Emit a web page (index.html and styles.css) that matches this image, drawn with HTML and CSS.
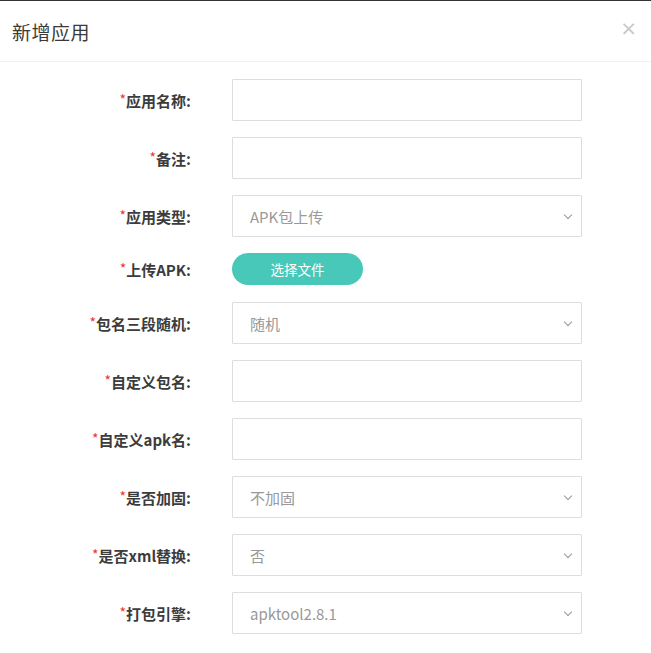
FILE: index.html
```html
<!DOCTYPE html>
<html lang="zh-CN">
<head>
    <meta charset="UTF-8">
    <meta name="viewport" content="width=device-width, initial-scale=1.0">
    <title>新增应用</title>
    <link rel="stylesheet" href="styles.css">
</head>
<body>
    <div class="modal">
        <div class="modal-header">
            <h3>新增应用</h3>
            <span class="close">&times;</span>
        </div>

        <form class="modal-body" action="#">
            <div class="form-row">
                <label><i>*</i>应用名称:</label>
                <input type="text" class="control">
            </div>
            <div class="form-row">
                <label><i>*</i>备注:</label>
                <input type="text" class="control">
            </div>
            <div class="form-row">
                <label><i>*</i>应用类型:</label>
                <div class="control select">APK包上传</div>
            </div>
            <div class="form-row short">
                <label><i>*</i>上传APK:</label>
                <button type="button" class="file-btn">选择文件</button>
            </div>
            <div class="form-row">
                <label><i>*</i>包名三段随机:</label>
                <div class="control select">随机</div>
            </div>
            <div class="form-row">
                <label><i>*</i>自定义包名:</label>
                <input type="text" class="control">
            </div>
            <div class="form-row">
                <label><i>*</i>自定义apk名:</label>
                <input type="text" class="control">
            </div>
            <div class="form-row">
                <label><i>*</i>是否加固:</label>
                <div class="control select">不加固</div>
            </div>
            <div class="form-row">
                <label><i>*</i>是否xml替换:</label>
                <div class="control select">否</div>
            </div>
            <div class="form-row">
                <label><i>*</i>打包引擎:</label>
                <div class="control select">apktool2.8.1</div>
            </div>
        </form>
    </div>
</body>
</html>
```

FILE: styles.css
```css
body {
    margin: 0;
    font-family: "Noto Sans CJK SC", "Noto Sans", sans-serif;
    background: #fff;
    color: #333;
}

.modal {
    border-top: 1px solid #333;
    background: #fff;
}

.modal-header {
    height: 60px;
    border-bottom: 1px solid #f0f0f0;
    display: flex;
    align-items: center;
    justify-content: space-between;
    padding: 0 14px 0 12px;
}

.modal-header h3 {
    margin: 0;
    font-size: 19px;
    font-weight: normal;
    color: #3a3a3a;
    letter-spacing: 0.5px;
}

.close {
    font-family: "DejaVu Sans", sans-serif;
    font-size: 20px;
    color: #c8c8c8;
    line-height: 1;
    margin-top: -6px;
}

.modal-body {
    padding-top: 17px;
}

.form-row {
    display: flex;
    align-items: center;
    margin-bottom: 16px;
}

.form-row.short {
    margin-bottom: 17px;
}

.form-row label {
    width: 191px;
    text-align: right;
    font-size: 15px;
    font-weight: bold;
    color: #3c3c3c;
    margin-right: 41px;
}

.form-row label i {
    font-style: normal;
    font-weight: normal;
    color: #e33;
    font-size: 14px;
    position: relative;
    top: -2px;
}

.control {
    box-sizing: border-box;
    width: 350px;
    height: 42px;
    border: 1px solid #ddd;
    border-radius: 1px;
    background: #fff;
    font-family: inherit;
    font-size: 15px;
    color: #999;
    padding: 0 17px;
    margin: 0;
}

.select {
    display: flex;
    align-items: center;
    position: relative;
}

.select::after {
    content: "";
    position: absolute;
    right: 10px;
    top: 16px;
    width: 5px;
    height: 5px;
    border-right: 1.5px solid #999;
    border-bottom: 1.5px solid #999;
    transform: rotate(45deg);
}

.file-btn {
    width: 131px;
    height: 32px;
    border: none;
    border-radius: 16px;
    background: #48c8b8;
    color: #fff;
    font-family: inherit;
    font-size: 13.5px;
    cursor: pointer;
}
```
